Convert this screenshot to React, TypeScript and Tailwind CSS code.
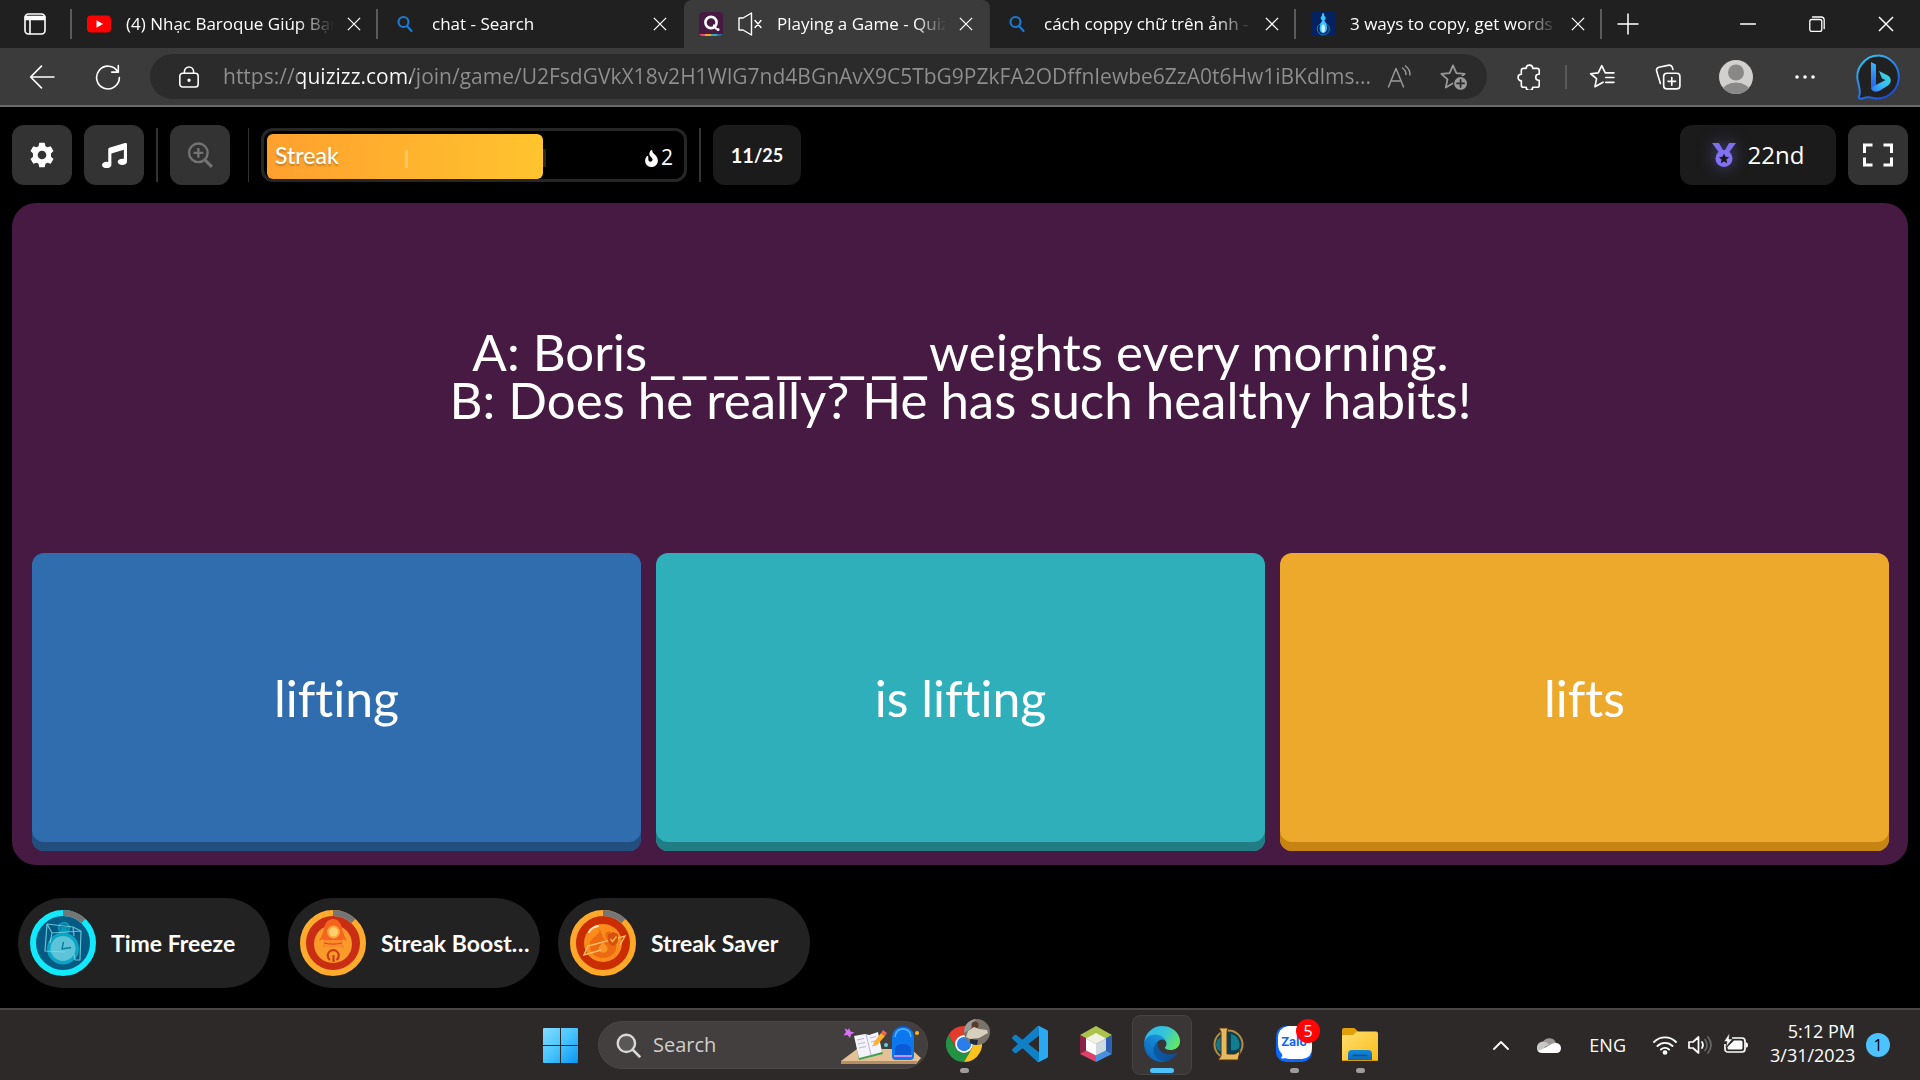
import type { ReactNode, SVGProps } from "react";
import { FaMusic, FaFire } from "react-icons/fa";

const UI = "font-['Open_Sans','Noto_Sans',sans-serif]";

function Line({ children, className = "", ...rest }: SVGProps<SVGSVGElement>) {
  return (
    <svg viewBox="0 0 24 24" fill="none" stroke="currentColor" strokeWidth="1.5" strokeLinecap="round" strokeLinejoin="round" className={`shrink-0 ${className}`} aria-hidden="true" {...rest}>
      {children}
    </svg>
  );
}

function Cross({ className }: { className: string }) {
  return (
    <Line className={className} viewBox="0 0 16 16" strokeLinecap="butt">
      <path d="M1 1L15 15M15 1L1 15" />
    </Line>
  );
}

/* ---------- Browser tabs ---------- */

function YoutubeIcon() {
  return (
    <svg viewBox="0 0 24 24" className="h-6 w-6 shrink-0" aria-hidden="true">
      <rect x="0" y="3.5" width="24" height="17" rx="4" fill="#ff0000" />
      <path d="M9.5 8.3v7.4L16 12z" fill="#fff" />
    </svg>
  );
}

function BingSearchIcon() {
  return (
    <Line className="h-6 w-6 text-[#1a7ad4]" strokeWidth="2.2">
      <circle cx="10.5" cy="10" r="5" />
      <path d="M14.2 14.2L18.5 19" />
    </Line>
  );
}

function QuizIcon() {
  return (
    <svg viewBox="0 0 24 24" className="h-6 w-6 shrink-0" aria-hidden="true">
      <defs>
        <clipPath id="quizClip"><rect width="24" height="24" rx="4" /></clipPath>
      </defs>
      <g clipPath="url(#quizClip)">
        <rect width="24" height="24" fill="#461a42" />
        <rect y="22" width="6" height="2" fill="#ec4b6e" />
        <rect x="6" y="22" width="6" height="2" fill="#efa929" />
        <rect x="12" y="22" width="6" height="2" fill="#2dafb9" />
        <rect x="18" y="22" width="6" height="2" fill="#2f6dae" />
      </g>
      <circle cx="12" cy="10.5" r="5.6" fill="none" stroke="#fff" strokeWidth="2.6" />
      <path d="M15 13.5l2 3" stroke="#fff" strokeWidth="2.2" strokeLinecap="round" />
      <circle cx="19" cy="17.5" r="1.5" fill="#fff" />
    </svg>
  );
}

function FlaskIcon() {
  return (
    <svg viewBox="0 0 24 24" className="h-6 w-6 shrink-0" aria-hidden="true">
      <rect width="24" height="24" fill="#04225f" />
      <circle cx="12.3" cy="17" r="6" fill="none" stroke="#1c7fd0" />
      <path d="M11.5 1h1.2l.8 3a2.6 2.6 0 01-.3 4.500q3 3 2.800 8c-.2 6-7.400 6-7.400 0q0-5 2.600-8a2.600 2.600 0 01-.4-4.500z" fill="#3cc4ff" />
      <ellipse cx="12.200" cy="16.500" rx="1.800" ry="4" fill="#c3f2ff" />
    </svg>
  );
}

type TabInfo = { title: string; icon: ReactNode; active?: boolean; line?: boolean };

const TABS: TabInfo[] = [
  { title: "(4) Nhạc Baroque Giúp Bạn", icon: <YoutubeIcon />, line: true },
  { title: "chat - Search", icon: <BingSearchIcon /> },
  { title: "Playing a Game - Quiz", icon: <QuizIcon />, active: true },
  { title: "cách coppy chữ trên ảnh -", icon: <BingSearchIcon />, line: true },
  { title: "3 ways to copy, get words", icon: <FlaskIcon />, line: true },
];

function Tab({ title, icon, active, line }: TabInfo) {
  return (
    <div className={`flex h-12 w-[306px] min-w-0 shrink items-center pl-[15px] ${active ? "rounded-t-lg bg-[#3b3b3b]" : "bg-[#202020]"}`}>
      <button type="button" role="tab" aria-selected={!!active} className="flex min-w-0 flex-1 items-center text-left text-white">
        <span className="mr-[15px] flex">{icon}</span>
        {active && (
          <Line className="mr-[15px] h-6 w-6" strokeWidth="1.4">
            <path d="M1 6h4L13.500 1v22L5 18H1z" />
            <path d="M17 8.500l6 7M23 8.500l-6 7" />
          </Line>
        )}
        <span className="min-w-0 flex-1 overflow-hidden text-[17px] leading-6 whitespace-nowrap [mask-image:linear-gradient(to_right,#000_82%,transparent)]">{title}</span>
      </button>
      <button type="button" aria-label={`Close ${title}`} className="ml-3 flex h-8 w-4 items-center justify-center text-white">
        <Cross className="h-3.5 w-3.5" />
      </button>
      <span className={`ml-3.5 h-[30px] w-0.5 ${line ? "bg-[#5c5c5c]" : "bg-transparent"}`} />
    </div>
  );
}

function TabStrip() {
  return (
    <div className={`flex h-12 items-center bg-[#202020] text-white ${UI}`}>
      <button type="button" aria-label="Tab actions" className="flex h-12 w-[70px] items-center justify-center">
        <svg viewBox="0 0 24 24" className="h-6 w-6" fill="none" stroke="currentColor" strokeWidth="1.6" aria-hidden="true">
          <rect x="2" y="2" width="20" height="20" rx="3.5" />
          <path d="M2.500 4.500h19v3h-19z" fill="currentColor" />
          <path d="M7 8v14" />
        </svg>
      </button>
      <span className="h-[30px] w-0.5 shrink-0 bg-[#5c5c5c]" />
      <div role="tablist" className="flex min-w-0">
        {TABS.map((t) => <Tab key={t.title} {...t} />)}
      </div>
      <button type="button" aria-label="New tab" className="ml-3.5 flex h-8 w-6 items-center justify-center">
        <Line className="h-6 w-6" strokeLinecap="butt"><path d="M12 1.500v21M1.500 12h21" /></Line>
      </button>
      <div className="ml-auto flex">
        <button type="button" aria-label="Minimize" className="flex h-12 w-[69px] items-center justify-center">
          <Line className="h-4 w-4" viewBox="0 0 16 16"><path d="M.5 8h15" /></Line>
        </button>
        <button type="button" aria-label="Restore" className="flex h-12 w-[69px] items-center justify-center">
          <Line className="h-4 w-4" viewBox="0 0 16 16" strokeWidth="1.300">
            <rect x=".8" y="3.500" width="12" height="12" rx="2" />
            <path d="M3.500 1h8.500a3.200 3.200 0 013.200 3.200v8.500" />
          </Line>
        </button>
        <button type="button" aria-label="Close window" className="flex h-12 w-[69px] items-center justify-center">
          <Cross className="h-4 w-4" />
        </button>
      </div>
    </div>
  );
}

/* ---------- Address bar ---------- */

const STAR = "M12 2l2.900 6.600 7.100.7-5.300 4.800 1.500 7L12 17.400 5.800 21l1.500-7L2 9.300l7.100-.7z";

function AddressBar() {
  return (
    <div className={`flex h-[59px] items-center border-b-2 border-[#6a6a6a] bg-[#3b3b3b] text-white ${UI}`}>
      <button type="button" aria-label="Back" className="ml-[29px] flex h-10 w-[26px] items-center justify-center">
        <Line className="h-[26px] w-[26px]"><path d="M23 12H1.500M11.500 2L1.500 12l10 10" /></Line>
      </button>
      <button type="button" aria-label="Refresh" className="ml-10 flex h-10 w-[26px] items-center justify-center">
        <Line className="h-[26px] w-[26px]">
          <path d="M21.100 7.250A10.500 10.500 0 1022.500 12.500M21.500 1.500v6h-6" />
        </Line>
      </button>
      <div className="ml-[29px] flex h-[45px] min-w-0 flex-1 items-center rounded-full bg-[#2b2b2b] pr-[20px] pl-[28px]">
        <Line className="mr-[23px] h-6 w-[22px]" strokeWidth="1.700">
          <rect x="2" y="8" width="20" height="15" rx="3" />
          <path d="M7 8V6a5 5 0 0110 0v2" />
          <circle cx="12" cy="15.500" r="1" fill="currentColor" />
        </Line>
        <input
          type="text"
          aria-label="Address"
          defaultValue="https://quizizz.com/join/game/U2FsdGVkX18v2H1WlG7nd4BGnAvX9C5TbG9PZkFA2ODffnIewbe6ZzA0t6Hw1iBKdlms..."
          className="min-w-0 flex-1 bg-[linear-gradient(to_right,#8f8f8f_75px,#fff_75px,#fff_188px,#8f8f8f_188px)] bg-clip-text text-[21px] text-transparent outline-none"
        />
        <button type="button" aria-label="Read aloud" className="ml-3 text-[#9a9a9a]">
          <Line className="h-6 w-6">
            <path d="M1.500 22L9 3.500 16.500 22M4 16h10M15.500 3a8 8 0 013.500 6.500M18.500 1a11 11 0 014.500 9" />
          </Line>
        </button>
        <button type="button" aria-label="Add to favorites" className="ml-7 text-[#9a9a9a]">
          <Line className="h-7 w-7">
            <path d={STAR} />
            <circle cx="18.500" cy="17.500" r="6" fill="currentColor" stroke="#2b2b2b" strokeWidth="1" />
            <path d="M18.500 14.500v6M15.500 17.500h6" stroke="#2b2b2b" />
          </Line>
        </button>
      </div>
      <button type="button" aria-label="Extensions" className="ml-[30px]">
        <Line className="h-[26px] w-[26px]">
          <path d="M8.500 4a3 3 0 016 0h4a2 2 0 012 2v3.500h-.5a2.700 2.700 0 100 5.500h.5v4.500a2 2 0 01-2 2h-4a3 3 0 01-6 0H6a2 2 0 01-2-2V15.500a3 3 0 010-6V6a2 2 0 012-2z" />
        </Line>
      </button>
      <span className="ml-[22px] h-6 w-0.5 bg-[#5a5a5a]" />
      <button type="button" aria-label="Favorites" className="ml-[22px]">
        <Line className="h-[26px] w-[26px]">
          <path d="M13 16.800L5.500 21l1.500-7.500L1.500 9l7-.8L11.800 1.500l3.200 6.700h8M15.500 12.500H23M15.500 17H23" />
        </Line>
      </button>
      <button type="button" aria-label="Collections" className="ml-10">
        <Line className="h-[26px] w-[26px]">
          <rect x="8" y="8.500" width="15" height="14.500" rx="3" />
          <path d="M15.500 12.500v7M12 16h7M5 18L1.500 6.500a3 3 0 012-3.500l9.500-2a3 3 0 013 2l.5 2" />
        </Line>
      </button>
      <button type="button" aria-label="Profile" className="ml-[38px]">
        <svg viewBox="0 0 34 34" className="h-[34px] w-[34px]" aria-hidden="true">
          <defs><clipPath id="pfp"><circle cx="17" cy="17" r="17" /></clipPath></defs>
          <g clipPath="url(#pfp)">
            <rect width="34" height="34" fill="#d2d0ce" />
            <circle cx="17" cy="12.500" r="8" fill="#8a8886" />
            <ellipse cx="17" cy="32" rx="14" ry="9.500" fill="#8a8886" />
          </g>
        </svg>
      </button>
      <button type="button" aria-label="Settings and more" className="ml-10">
        <svg viewBox="0 0 24 24" className="h-6 w-6" fill="currentColor" aria-hidden="true">
          <circle cx="4" cy="12" r="1.800" /><circle cx="12" cy="12" r="1.800" /><circle cx="20" cy="12" r="1.800" />
        </svg>
      </button>
      <button type="button" aria-label="Bing chat" className="mr-[18px] ml-[39px]">
        <svg viewBox="0 0 46 46" className="h-[46px] w-[46px]" aria-hidden="true">
          <defs>
            <linearGradient id="bRing" x1="0" y1="0" x2=".6" y2="1"><stop stopColor="#2ed0f0" /><stop offset=".5" stopColor="#2b8cf0" /><stop offset="1" stopColor="#1a4fe0" /></linearGradient>
            <linearGradient id="bStem" x1="0" y1="0" x2="0" y2="1"><stop stopColor="#38b8fb" /><stop offset="1" stopColor="#2360ee" /></linearGradient>
            <linearGradient id="bBowl" x1="1" y1="0" x2="0" y2="1"><stop stopColor="#35e0d0" /><stop offset=".6" stopColor="#3bb4fb" /><stop offset="1" stopColor="#2b78f5" /></linearGradient>
          </defs>
          <path d="M23 1.500a21.500 21.500 0 11-6 42.500c-3-1-6-1.500-10 .3-2.500 1-5 .2-4-2 2-3 .5-8-.5-12.500A21.500 21.500 0 0123 1.500z" fill="#212121" stroke="url(#bRing)" strokeWidth="2" />
          <path d="M15 8l5 2.500v21L15 34z" fill="url(#bStem)" />
          <path d="M23 17l3 7.500 3.500 1.600L18 32l-3 2c1 4 5.500 4.500 9 2.500l8-5c4-3 3.500-8-.5-10.200z" fill="url(#bBowl)" />
        </svg>
      </button>
    </div>
  );
}

/* ---------- Game ---------- */

const GAME = "font-['Lato','Open_Sans',sans-serif] [font-variant-ligatures:none]";

function Rule() {
  return <span className="h-[54px] w-0.5 shrink-0 bg-[#333]" />;
}

function ToolButton({ label, children }: { label: string; children: ReactNode }) {
  return (
    <button type="button" aria-label={label} className="flex h-[60px] w-[60px] shrink-0 items-center justify-center rounded-xl bg-[#333] text-white">
      {children}
    </button>
  );
}

function GameHeader() {
  return (
    <header className="flex items-center gap-3 px-3 py-[18px]">
      <ToolButton label="Settings">
        <svg viewBox="0 0 24 24" className="h-[26px] w-[26px]" fill="currentColor" fillRule="evenodd" aria-hidden="true">
          <path d="M9.500.8h5l.7 3.100 1.800 1 3-1 2.600 4.400-2.300 2.200v3l2.300 2.200-2.600 4.400-3-1-1.800 1-.7 3.100h-5l-.7-3.100-1.800-1-3 1-2.600-4.400 2.300-2.200v-3L1.400 8.300 4 3.900l3 1 1.800-1zM12 8a4 4 0 100 8 4 4 0 000-8z" />
        </svg>
      </ToolButton>
      <ToolButton label="Music"><FaMusic className="h-[25px] w-[25px]" /></ToolButton>
      <Rule />
      <ToolButton label="Zoom in">
        <Line className="h-[26px] w-[26px] text-[#737373]" strokeWidth="2.200" strokeLinecap="butt">
          <circle cx="10.500" cy="10" r="8.600" />
          <path d="M10.500 5.500v9M6 10h9" />
          <path d="M16.500 16.500l6.500 6.500" strokeWidth="2.800" />
        </Line>
      </ToolButton>
      <span className="ml-1.5"><span className="block h-[54px] w-px bg-[#333]" /></span>
      <div className="flex h-[54px] w-[426px] rounded-xl border-[3px] border-[#262626] p-[3px] pb-0">
        <div className="flex h-[45px] w-[276px] items-center rounded-md bg-linear-to-r from-[#ffa02e] to-[#ffc42e] pl-2">
          <span className="w-[130px] pb-1 text-[23px] leading-6 font-medium text-white [text-shadow:0_2px_2px_rgba(0,0,0,0.25)]">Streak</span>
          <span className="mt-1 h-[18px] w-[3px] bg-white/25" />
        </div>
        <span className="mt-[15px] h-[18px] w-[3px] bg-[#262626]" />
        <span className={`mt-0.5 mr-2 ml-auto flex items-center gap-0.5 text-[21px] text-white ${UI}`}>
          <FaFire className="mt-0.5 h-[17px] w-[15px]" />2
        </span>
      </div>
      <Rule />
      <div className="flex h-[60px] w-[88px] items-center justify-center rounded-xl bg-[#1b1b1b] font-bold text-white">
        <span className="text-xl">11</span><span className="text-lg">/25</span>
      </div>
      <div className="ml-auto flex h-[60px] w-[156px] items-center justify-center gap-3 rounded-xl bg-[#1b1b1b] text-white">
        <svg viewBox="0 0 24 24" className="h-6 w-6 drop-shadow-[0_0_8px_rgba(128,118,240,0.5)]" aria-hidden="true">
          <path d="M0 0h7l4.500 8-4.500 1.500zM24 0h-7l-4.500 8 4.500 1.500z" fill="#7c6ff0" />
          <circle cx="12" cy="15.500" r="8.500" fill="#8072f2" />
          <path d="M12 10.500l1.500 3.300 3.600.4-2.700 2.400.8 3.600L12 18.400l-3.200 1.800.8-3.600-2.700-2.400 3.600-.4z" fill="#1b1b1b" />
        </svg>
        <span className={`text-2xl ${UI}`}>22nd</span>
      </div>
      <ToolButton label="Full screen">
        <Line className="h-8 w-8" viewBox="0 0 32 32" strokeWidth="3" strokeLinecap="butt" strokeLinejoin="miter">
          <path d="M2.500 14V6h8M21.500 6h8v8M29.500 18.500V26h-8M10.500 26h-8v-7.500" />
        </Line>
      </ToolButton>
    </header>
  );
}

function Blank({ length }: { length: number }) {
  return (
    <span className="inline-flex gap-1 pl-0.5 text-[60px] leading-[48px]">
      {Array.from({ length }, (_, i) => <span key={i}>_</span>)}
    </span>
  );
}

function Answer({ text, tone }: { text: string; tone: string }) {
  return (
    <button type="button" className={`flex h-[298px] flex-1 items-center justify-center rounded-xl pb-2 text-[50px] leading-[48px] text-white ${tone}`}>
      {text}
    </button>
  );
}

function Ring({ color, fill, children }: { color: string; fill: string; children: ReactNode }) {
  return (
    <svg viewBox="0 0 66 66" className="h-[66px] w-[66px] shrink-0" aria-hidden="true">
      <circle cx="33" cy="33" r="28" fill={fill} />
      <circle cx="33" cy="33" r="30" fill="none" stroke={color} strokeWidth="6" />
      <path d="M33 3a30 30 0 0120.500 8" fill="none" stroke="#757575" strokeWidth="6" />
      {children}
    </svg>
  );
}

function PowerUp({ name, children }: { name: string; children: ReactNode }) {
  return (
    <button type="button" className="flex h-[90px] w-[252px] items-center gap-[15px] rounded-full bg-[#222] px-3 text-left text-[23px] leading-7 font-bold text-white">
      {children}
      <span className="whitespace-nowrap">{name}</span>
    </button>
  );
}

function PowerUps() {
  return (
    <footer className="flex gap-[18px] px-[18px] pt-[33px] pb-5">
      <PowerUp name="Time Freeze">
        <Ring color="#12e9fb" fill="#045a83">
          <circle cx="34" cy="18" r="5" fill="none" stroke="#0697b4" strokeWidth="2.500" />
          <rect x="31" y="17" width="6" height="7" fill="#0697b4" />
          <circle cx="33" cy="38.500" r="16" fill="#0aa5c4" />
          <circle cx="33" cy="38.500" r="12.500" fill="#5cc3d8" />
          <path d="M33.500 32l-1.500 7 9-1.500" fill="none" stroke="#067a99" strokeWidth="1.300" />
          <path d="M17 14l26 3 8 4-1 29h-5M17 14l-2 27 20 1M17 14l5 9 29-2M22 23l-2 10M43 17l1 9M45 50l-1-6" fill="none" stroke="#7fdcec" strokeWidth="1.200" opacity=".8" />
        </Ring>
      </PowerUp>
      <PowerUp name="Streak Boost…">
        <Ring color="#ffab2e" fill="#c92e14">
          <circle cx="33" cy="34" r="19" fill="#f99b2a" />
          <path d="M24 19c1-8 6-10 9-10s8 2 9 10l2 6 3 6-4-2v8H23v-8l-4 2 3-6z" fill="#f4661e" />
          <path d="M23 30h20v6c-5 2-15 2-20 0z" fill="#ff8b2c" />
          <path d="M24 33c6 1.500 12 1.500 18 0" fill="none" stroke="#d4481a" />
          <circle cx="33.500" cy="22" r="6.500" fill="#fba53c" />
          <circle cx="33.500" cy="22" r="4.500" fill="#ffd06f" />
          <path d="M30 50a5.500 5.500 0 116.500 0M33.500 52v-7" fill="none" stroke="#cf3a16" strokeWidth="2.200" />
        </Ring>
      </PowerUp>
      <PowerUp name="Streak Saver">
        <Ring color="#ffa92b" fill="#c92d00">
          <circle cx="33" cy="33" r="19" fill="#fb8c1b" />
          <path d="M29 18c3 6-7 8-9 15-1 9 5 15 13 15s15-6 13-14c-1-5-6-5-6-13-6 0-5 6-3 9-4 2-5-8-8-12z" fill="#ee6a12" />
          <path d="M33 32c3 4 7 6 3 10-4 2-9-1-7-5z" fill="#fb9425" />
          <path d="M19 22q3-5 9-6" stroke="#ffe3b8" strokeWidth="2" fill="none" strokeLinecap="round" />
          <path d="M31 40l-17 5 4-9 37-10-5 9" fill="none" stroke="#ffc06a" strokeWidth="1.400" />
          <path d="M43 22l5 2v6q-1 5-5 6-4-1-5-6v-6z" fill="#d8500f" />
          <path d="M40.500 29l2 2.500 4-5" fill="none" stroke="#ffb14a" strokeWidth="1.500" />
        </Ring>
      </PowerUp>
    </footer>
  );
}

/* ---------- Taskbar ---------- */

function ChromeIcon() {
  return (
    <svg viewBox="0 0 48 48" className="h-9 w-9" aria-hidden="true">
      <path d="M3.200 12A24 24 0 0144.800 12H24A12 12 0 0013.600 30z" fill="#e33b2e" />
      <path d="M3.200 12A24 24 0 0024 48l10.400-18a12 12 0 01-20.800 0z" fill="#229342" />
      <path d="M44.800 12A24 24 0 0124 48l10.400-18A12 12 0 0024 12z" fill="#fcc31e" />
      <circle cx="24" cy="24" r="12" fill="#fff" />
      <circle cx="24" cy="24" r="9.500" fill="#2b7de9" />
    </svg>
  );
}

function CodeIcon() {
  return (
    <svg viewBox="0 0 100 100" className="h-9 w-9" aria-hidden="true">
      <path fillRule="evenodd" fill="#0f7fc6" d="M70.900 99.300c1.600.6 3.400.6 5-.2l20.600-9.900c2.200-1 3.500-3.200 3.500-5.600V16.400c0-2.400-1.400-4.600-3.500-5.600L75.900.9c-2.100-1-4.500-.8-6.400.5l-.7.6-39.400 36L12.200 25c-1.600-1.200-3.800-1.100-5.300.2L1.400 30.300c-1.800 1.600-1.800 4.500 0 6.100L16.200 50 1.400 63.600c-1.800 1.600-1.800 4.500 0 6.100l5.500 5c1.500 1.400 3.700 1.500 5.300.3l17.200-13 39.400 36c.6.600 1.300 1 2.100 1.300zM75 27.300L45.100 50 75 72.700z" />
      <path fill="#2aa9f0" d="M75.900 99.100c-2.400 1-5 .4-6.800-1.500C71 99 75 98 75 94V6c0-4-4-5-5.900-3.600C71 .5 73.500 0 75.900.9l20.600 9.900c2.200 1 3.500 3.200 3.500 5.600v67.200c0 2.400-1.400 4.600-3.500 5.600z" />
    </svg>
  );
}

function CubeIcon() {
  return (
    <svg viewBox="0 0 36 36" className="h-9 w-9" aria-hidden="true">
      <path d="M18 0l16 9-16 9L2 9z" fill="#adc24a" />
      <path d="M2 9l6 3.500v12L2 28z" fill="#8c2347" />
      <path d="M34 9l-6 3.500v12l6 3.500z" fill="#2b62b5" />
      <path d="M2 28l6-3.500 10 5V36z" fill="#e0406a" />
      <path d="M34 28l-6-3.500-10 5V36z" fill="#4690df" />
      <path d="M18 7l10 5.500L18 18 8 12.500z" fill="#f1f1e6" />
      <path d="M8 12.500L18 18v11.500L8 24.500z" fill="#fff" />
      <path d="M28 12.500L18 18v11.500l10-5z" fill="#cfd9e2" />
    </svg>
  );
}

function EdgeIcon() {
  return (
    <svg viewBox="0 0 256 256" className="h-9 w-9" aria-hidden="true">
      <defs>
        <linearGradient id="eA" x1=".2" y1=".5" x2="1" y2=".5"><stop stopColor="#0c59a4" /><stop offset="1" stopColor="#114a8b" /></linearGradient>
        <linearGradient id="eB" x1=".8" y1="0" x2=".2" y2="1"><stop stopColor="#1b9de2" /><stop offset="1" stopColor="#0a5fb5" /></linearGradient>
        <linearGradient id="eC" x1="0" y1=".3" x2="1" y2=".7"><stop stopColor="#2fb8ec" /><stop offset=".5" stopColor="#35c5d6" /><stop offset="1" stopColor="#66eb5e" /></linearGradient>
      </defs>
      <path fill="url(#eA)" d="M231 190.500c-3.400 1.800-6.900 3.400-10.500 4.700a101.500 101.500 0 01-35.900 6.500c-47.300 0-88.500-32.500-88.500-74.300a31.500 31.500 0 0116.400-27.300c-42.800 1.800-53.800 46.400-53.800 72.500 0 73.900 68.100 81.400 82.800 81.400 7.900 0 19.800-2.300 27-4.600l1.300-.4a128.300 128.300 0 0066.600-52.800 4 4 0 00-5.400-5.700z" />
      <path fill="url(#eB)" d="M105.700 241.400a79.200 79.200 0 01-22.700-21.300 80.700 80.700 0 0129.500-120c3.200-1.500 8.500-4.100 15.600-4a32.400 32.400 0 0125.700 13 31.900 31.900 0 016.300 18.700c0-.2 24.500-79.600-80-79.600-43.900 0-80 41.600-80 78.200a130.200 130.200 0 0012.100 56 128 128 0 00156.400 67 75.500 75.500 0 01-62.800-8z" />
      <path fill="url(#eC)" d="M152.300 148.900c-.9 1-3.400 2.500-3.400 5.600 0 2.600 1.700 5.200 4.800 7.300 14.300 10 41.400 8.600 41.500 8.600 10.700 0 21.100-2.900 30.300-8.300a61.400 61.400 0 0030.400-52.900c.3-22.400-8-37.300-11.300-43.900C223.500 23.900 177.700 0 128 0A128 128 0 000 126.200c.5-36.500 36.800-66 80-66 3.500 0 23.500.3 42 10.100 16.300 8.600 24.900 18.900 30.800 29.200 6.200 10.700 7.300 24.100 7.300 29.500 0 5.300-2.700 13.300-7.800 19.900z" />
    </svg>
  );
}

function LeagueIcon() {
  return (
    <svg viewBox="0 0 36 36" className="h-9 w-9" aria-hidden="true">
      <circle cx="18.500" cy="18.500" r="14" fill="#0b3c50" stroke="#b98b3c" strokeWidth="2" />
      <path d="M21 8a11 11 0 018 14c-2 2-5 3-8 2z" fill="#117f8f" />
      <path d="M7 14a12 12 0 000 9l4 3V11z" fill="#15788a" />
      <path d="M9 2h9l-1 3v23h8l5-3-2 9H8l3-4V6z" fill="#e6b860" stroke="#54340f" strokeWidth="1" />
    </svg>
  );
}

function ZaloIcon() {
  return (
    <span className="relative flex h-9 w-9">
      <svg viewBox="0 0 36 36" className="h-9 w-9" aria-hidden="true">
        <rect width="36" height="36" rx="10" fill="#0a67ff" />
        <path d="M12 0h14a10 10 0 0110 10v12q0 10-10 11H14q-3 0-5-1-2 1-4 0 2-2 1-4-4-4-4-10v-6Q2 2 12 0z" fill="#fff" />
      </svg>
      <span className="absolute inset-x-0 top-2 text-center font-['Roboto',sans-serif] text-[13px] leading-4 font-bold text-[#0a67ff]">Zalo</span>
      <span className="absolute -top-[7px] -right-2 flex h-6 w-6 items-center justify-center rounded-full bg-[#ff0505] text-base leading-5 text-white">5</span>
    </span>
  );
}

function FolderIcon() {
  return (
    <svg viewBox="0 0 36 36" className="h-9 w-9" aria-hidden="true">
      <defs>
        <linearGradient id="fo" x1="0" y1="0" x2="1" y2="1"><stop stopColor="#ffdf6e" /><stop offset="1" stopColor="#fbbd1c" /></linearGradient>
        <linearGradient id="fb" x1="0" y1="0" x2="0" y2="1"><stop stopColor="#1488d8" /><stop offset="1" stopColor="#0a66b4" /></linearGradient>
      </defs>
      <path d="M0 4q0-2 2-2h9q1.500 0 2.500 1L16 5.500V12H0z" fill="#e0a00a" />
      <path d="M0 9h11l4-3.500h19q2 0 2 2V35H0z" fill="url(#fo)" />
      <path d="M6 35v-7q0-4 4-4h16q4 0 4 4v7z" fill="url(#fb)" />
      <path d="M11.500 29.500h13" stroke="#0b4f8e" strokeWidth="1.600" strokeLinecap="round" />
      <path d="M0 34h36v1H0z" fill="#d99a0c" />
    </svg>
  );
}

function SearchArt() {
  return (
    <svg viewBox="0 0 80 40" className="h-10 w-20" aria-hidden="true">
      <path d="M16 24h54l10 9-5 6H0v-3z" fill="#e4c196" />
      <path d="M0 36h77l-3 3H0z" fill="#b78e62" />
      <path d="M14 13l22-4 6 20-24 6z" fill="#3fa34d" />
      <path d="M13 11l11-2 4 1 9-3 4 20-11 3-12 3z" fill="#f4f2fa" />
      <path d="M25 9l5 21M16 15l7-1.500M17 19l7-1.500M18 23l7-1.500M29 13l6-1.500M30 17l6-1.500M31 21l6-1.500" stroke="#a9a6c4" strokeWidth=".8" fill="none" />
      <path d="M33 17l7-9 4 3-7 8-5 2z" fill="#fcb02c" />
      <path d="M40 8l2-3 4 3-2 3z" fill="#f0625a" />
      <path d="M8 3l1.500 3.500 4 1-3.500 2L9 13l-2.500-3-4 .5L5 7 3.500 3.500 7 5z" fill="#d873f5" />
      <circle cx="45" cy="20" r="2" fill="#5fd3e0" />
      <circle cx="76" cy="8" r="2" fill="#fcb515" />
      <path d="M59 3q3-4 7 0" fill="none" stroke="#0a4ebc" strokeWidth="2" />
      <path d="M51 14q0-12 11-12t11 12v17q0 4-4 4H55q-4 0-4-4z" fill="#0b78f0" />
      <path d="M54 12q1-8 8-8t8 8" fill="none" stroke="#57b6ff" strokeWidth="1.500" />
      <path d="M54 24q1-5 8-5t8 5v7H54z" fill="#0d5ad8" />
      <path d="M53 31h18" stroke="#c58bff" strokeWidth="2" />
    </svg>
  );
}

type AppInfo = { name: string; icon: ReactNode; running?: boolean; active?: boolean };

const APPS: AppInfo[] = [
  {
    name: "Google Chrome",
    running: true,
    icon: (
      <span className="relative flex">
        <ChromeIcon />
        <svg viewBox="0 0 26 26" className="absolute -top-[7px] -right-2 h-[26px] w-[26px]" aria-hidden="true">
          <defs><clipPath id="av"><circle cx="13" cy="13" r="13" /></clipPath></defs>
          <g clipPath="url(#av)">
            <rect width="26" height="26" fill="#79736a" />
            <path d="M0 0h12L6 10l-6 4z" fill="#9a9c9c" />
            <circle cx="11" cy="6" r="3.500" fill="#5b3c2a" />
            <path d="M4 12l6-4 5 2 8 1 1 3-9 5-9 1-4-2z" fill="#d6cfbd" />
            <path d="M6 20l8 1-1 5H6z" fill="#202a3c" />
            <path d="M18 0h8v9z" fill="#4d4b47" />
          </g>
        </svg>
      </span>
    ),
  },
  { name: "Visual Studio Code", icon: <CodeIcon /> },
  { name: "NetBeans", icon: <CubeIcon /> },
  { name: "Microsoft Edge", icon: <EdgeIcon />, running: true, active: true },
  { name: "League of Legends", icon: <LeagueIcon /> },
  { name: "Zalo", icon: <ZaloIcon />, running: true },
  { name: "File Explorer", icon: <FolderIcon />, running: true },
];

function TaskApp({ name, icon, running, active }: AppInfo) {
  return (
    <button type="button" aria-label={name} className={`flex h-[60px] w-[60px] flex-col items-center rounded-lg border pt-2.5 ${active ? "border-[#464342] bg-[#3a3636]" : "border-transparent"}`}>
      {icon}
      <span className={`mt-1.5 h-[5px] rounded-full ${active ? "w-6 bg-[#4cc2ff]" : running ? "w-[9px] bg-[#9f9c9c]" : "w-0"}`} />
    </button>
  );
}

function Taskbar() {
  return (
    <div className={`grid h-[72px] shrink-0 grid-cols-[1fr_auto_1fr] items-center border-t-2 border-[#4a4747] bg-[#2d2929] text-white ${UI}`}>
      <span />
      <div className="flex items-center gap-1.5">
        <button type="button" aria-label="Start" className="mr-0.5 flex h-[60px] w-[60px] items-center justify-center">
          <svg viewBox="0 0 35 35" className="h-[35px] w-[35px]" aria-hidden="true">
            <defs>
              <linearGradient id="win" gradientUnits="userSpaceOnUse" x1="0" y1="0" x2="35" y2="35"><stop stopColor="#86ddff" /><stop offset=".5" stopColor="#46c4fc" /><stop offset="1" stopColor="#0b95f5" /></linearGradient>
            </defs>
            <path fill="url(#win)" d="M1 0h16v17H0V1q0-1 1-1zM18 0h16q1 0 1 1v16H18zM0 18h17v17H1q-1 0-1-1zM18 18h17v16q0 1-1 1H18z" />
          </svg>
        </button>
        <label className="flex h-12 w-[330px] items-center rounded-full border border-[#4b4747] bg-[#433f3f] pr-1.5 pl-4">
          <Line className="h-[26px] w-[26px] text-[#d9d9d9]" strokeWidth="2.200">
            <circle cx="10.500" cy="10.500" r="8" fill="#5a5757" />
            <path d="M16.500 16.500l6 6" strokeWidth="2.600" />
          </Line>
          <input type="text" aria-label="Search" placeholder="Search" className="ml-3 min-w-0 flex-1 bg-transparent text-xl text-white outline-none placeholder:text-[#d0cecd]" />
          <SearchArt />
        </label>
        {APPS.map((a) => <TaskApp key={a.name} {...a} />)}
      </div>
      <div className="flex items-center justify-end pr-[30px]">
        <button type="button" aria-label="Show hidden icons" className="mr-7">
          <Line className="h-4 w-4" viewBox="0 0 16 16" strokeWidth="1.800"><path d="M1 12l7-7 7 7" /></Line>
        </button>
        <svg viewBox="0 0 24 16" className="mr-7 h-4 w-6" aria-hidden="true">
          <path d="M6 5a7 6.500 0 0113 1l-8 4-7-4z" fill="#9b9998" />
          <path d="M6 4.500q3 0 6 2.500L2 15Q-1 13 0 9.500q1-4.500 6-5z" fill="#c9c7c6" />
          <path d="M18.500 6q5 0 5.500 5 0 5-5 5H5q-3 0-4-2L13 8q2-2 5.500-2z" fill="#fff" />
        </svg>
        <span className="mr-[27px] text-lg leading-6">ENG</span>
        <Line className="mr-[11px] h-6 w-6" strokeWidth="1.900">
          <path d="M1 9a15.500 15.500 0 0122 0M4.500 13a10.500 10.500 0 0115 0M8 16.500a5.700 5.700 0 018 0" />
          <circle cx="12" cy="19.500" r="1.400" fill="currentColor" />
        </Line>
        <Line className="mr-3 h-6 w-6" strokeWidth="1.700">
          <path d="M1 9h4l5.500-5v16L5 15H1z" />
          <path d="M14 9q2 3 0 6" />
          <path d="M17 6.500q4 5.500 0 11M20 4q6 8 0 16" stroke="#6a6767" />
        </Line>
        <svg viewBox="0 0 24 24" className="mr-[22px] h-6 w-6" aria-hidden="true">
          <path d="M8 5h10q3 0 3 3v8q0 3-3 3H4q-3 0-3-3V11" fill="none" stroke="#fff" strokeWidth="1.700" />
          <path d="M10 7.500h7q1.500 0 1.500 1.500v6q0 1.500-1.500 1.500H5q-1.500 0-1.500-1.500v-1z" fill="#fff" />
          <path d="M22 9.500h1q1 1 1 2.500t-1 2.500h-1z" fill="#fff" />
          <path d="M5.500 0L0 8.500h3L2 14l6.500-8H5z" fill="#fff" stroke="#2d2929" strokeWidth=".6" />
        </svg>
        <div className="w-[85px] pb-1 text-right text-lg leading-6 whitespace-nowrap"><div>5:12 PM</div><div>3/31/2023</div></div>
        <button type="button" aria-label="1 notification" className="ml-[11px] flex h-6 w-6 items-center justify-center rounded-full bg-[#4cc2ff] text-base leading-6 text-black">1</button>
      </div>
    </div>
  );
}

export default function App() {
  return (
    <div className="flex min-h-screen flex-col bg-black">
      <TabStrip />
      <AddressBar />
      <div className={`flex flex-1 flex-col text-white ${GAME}`}>
        <GameHeader />
        <main className="mx-3 flex flex-1 flex-col rounded-3xl bg-[#461a42] pr-[19px] pb-3.5 pl-5">
          <h1 className="flex flex-1 flex-col items-center justify-center pb-2 text-center text-[51px] leading-[48px]">
            <span>A: Boris<Blank length={9} />weights every morning.</span>
            <span>B: Does he really? He has such healthy habits!</span>
          </h1>
          <div className="flex gap-[15px]">
            <Answer text="lifting" tone="bg-[#2f6dae] shadow-[inset_0_-9px_0_#214e7c]" />
            <Answer text="is lifting" tone="bg-[#2fafb9] shadow-[inset_0_-9px_0_#217d84]" />
            <Answer text="lifts" tone="bg-[#eda92c] shadow-[inset_0_-9px_0_#c68412]" />
          </div>
        </main>
        <PowerUps />
      </div>
      <Taskbar />
    </div>
  );
}
